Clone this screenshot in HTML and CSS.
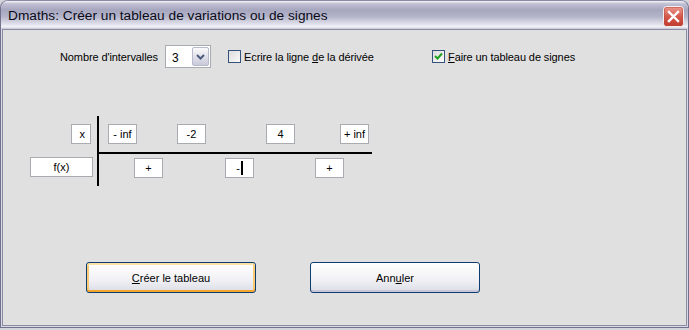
FILE: index.html
```html
<!DOCTYPE html>
<html>

<head>
    <meta charset="UTF-8">
    <link rel="stylesheet" href="styles.css">
</head>

<body>
    <div class="window">
        <div class="titlebar">
            <span class="title">Dmaths: Créer un tableau de variations ou de signes</span>
            <span class="close">
                <svg width="21" height="21" viewBox="0 0 21 21">
                    <defs>
                        <linearGradient id="red" x1="0" y1="0" x2="0" y2="1">
                            <stop offset="0" stop-color="#ec9a90" />
                            <stop offset="0.5" stop-color="#d6594d" />
                            <stop offset="1" stop-color="#c0392e" />
                        </linearGradient>
                    </defs>
                    <rect x="0.5" y="0.5" width="20" height="20" rx="3" fill="url(#red)" stroke="#f4f0f0"></rect>
                    <rect x="1.5" y="1.5" width="18" height="18" rx="2" fill="none" stroke="#b8483e" stroke-opacity="0.5"></rect>
                    <path d="M6 6 L15 15 M15 6 L6 15" stroke="#ffffff" stroke-width="2.4" stroke-linecap="square"></path>
                </svg>
            </span>
        </div>
        <div class="client">
            <div class="options">
                <span class="label">Nombre d'intervalles</span>
                <span class="select">
                    <span class="select-value">3</span>
                    <span class="select-btn">
                        <svg width="9" height="6" viewBox="0 0 9 6">
                            <path d="M1 1 L4.5 4.5 L8 1" fill="none" stroke="#4d5d7d" stroke-width="2"></path>
                        </svg>
                    </span>
                </span>
                <span class="check check-first">
                    <span class="box"></span>
                    <span>Ecrire la ligne <u>d</u>e la dérivée</span>
                </span>
                <span class="check">
                    <span class="box">
                        <svg width="11" height="11" viewBox="0 0 11 11">
                            <path d="M2 5 L4.5 7.5 L9 2.5" fill="none" stroke="#21a121" stroke-width="2"></path>
                        </svg>
                    </span>
                    <span><u>F</u>aire un tableau de signes</span>
                </span>
            </div>

            <div class="tab">
                <div class="tab-left">
                    <span class="cell cell-x">x</span>
                    <span class="cell cell-fx">f(x)</span>
                </div>
                <div class="tab-bar"></div>
                <div class="tab-right">
                    <div class="tab-row">
                        <span class="cell" style="margin-left: 9px">- inf</span>
                        <span class="cell" style="margin-left: 40px">-2</span>
                        <span class="cell" style="margin-left: 60px">4</span>
                        <span class="cell" style="margin-left: 45px">+ inf</span>
                    </div>
                    <div class="tab-line"></div>
                    <div class="tab-row tab-row-signs">
                        <span class="cell" style="margin-left: 35px">+</span>
                        <span class="cell" style="margin-left: 62px">-<span class="caret"></span></span>
                        <span class="cell" style="margin-left: 61px">+</span>
                    </div>
                </div>
            </div>

            <div class="buttons">
                <span class="button button-default"><u>C</u>réer le tableau</span>
                <span class="button">Ann<u>u</u>ler</span>
            </div>
        </div>
    </div>
</body>

</html>
```

FILE: styles.css
```css
body {
    margin: 0;
    background-color: #d4d4dc;
    font-family: "Liberation Sans", Arial, sans-serif;
    font-size: 11px;
    color: #000;
}

.window {
    width: 689px;
    height: 328px;
    box-sizing: border-box;
    display: flex;
    flex-direction: column;
    background-color: #d9d9e4;
    border: 1px solid #72728e;
    border-top-color: #8a8aa4;
    border-radius: 8px 8px 0 0;
}

.titlebar {
    height: 28px;
    flex-shrink: 0;
    display: flex;
    align-items: center;
    padding: 0 3px 0 7px;
    border-radius: 7px 7px 0 0;
    background: linear-gradient(to bottom,
            #f6f6fa 0,
            #c0c0d4 10%,
            #a6a6bf 32%,
            #b3b3c9 55%,
            #dcdce8 80%,
            #f2f2f8 92%,
            #c6c6d4 100%);
}

.title {
    flex: 1;
    font-size: 13.7px;
    color: #0a0a18;
    padding-top: 1px;
}

.close {
    display: flex;
    margin-top: 2px;
    margin-right: 1px;
}

.client {
    flex: 1;
    margin: 0 1px 1px;
    background-color: #e0e0e0;
    border: 1px solid #8b8ba6;
    padding: 15px 0 0 57px;
}

/* options line */

.options {
    display: flex;
    align-items: center;
    height: 23px;
    letter-spacing: -0.1px;
}

.label {
    width: 105px;
}

.select {
    width: 46px;
    height: 23px;
    box-sizing: border-box;
    display: flex;
    align-items: center;
    justify-content: space-between;
    background-color: #fff;
    border: 1px solid #a7acb2;
    padding: 0 1px 0 6px;
}

.select-value {
    font-size: 12px;
    padding-top: 2px;
}

.select-btn {
    width: 17px;
    height: 19px;
    box-sizing: border-box;
    display: flex;
    align-items: center;
    justify-content: center;
    border: 1px solid #b9b9cc;
    border-radius: 2px;
    background: linear-gradient(to bottom, #fafafc, #dcdce8 60%, #c9c9da);
}

.check {
    display: flex;
    align-items: center;
    gap: 3px;
    margin-left: 17px;
}

.check-first {
    width: 187px;
}

.box {
    width: 13px;
    height: 13px;
    box-sizing: border-box;
    display: flex;
    align-items: center;
    justify-content: center;
    border: 1px solid #34527c;
    background: linear-gradient(135deg, #dcdcdc, #fafafa);
}

/* table */

.tab {
    display: flex;
    margin: 48px 0 0 -30px;
    height: 70px;
}

.tab-left {
    width: 67px;
    display: flex;
    flex-direction: column;
    align-items: flex-end;
}

.cell {
    height: 20px;
    width: 29px;
    box-sizing: border-box;
    display: flex;
    align-items: center;
    justify-content: center;
    background-color: #fff;
    border: 1px solid #a8acb1;
    font-size: 11px;
}

.cell-x {
    width: 20px;
    margin: 8px 6px 0 0;
    justify-content: flex-end;
    padding-right: 5px;
}

.cell-fx {
    width: 63px;
    margin: 13px 4px 0 0;
}

.tab-bar {
    width: 2px;
    background-color: #000;
}

.tab-right {
    width: 273px;
}

.tab-row {
    display: flex;
    margin-top: 8px;
}

.tab-line {
    height: 2px;
    margin-top: 8px;
    background-color: #000;
}

.tab-row-signs {
    margin-top: 4px;
}

.caret {
    width: 2px;
    height: 14px;
    margin-left: 1px;
    background-color: #000;
}

/* buttons */

.buttons {
    display: flex;
    gap: 54px;
    margin: 76px 0 0 26px;
}

.button {
    width: 170px;
    height: 31px;
    box-sizing: border-box;
    display: flex;
    align-items: center;
    justify-content: center;
    border: 1px solid #0c3c70;
    border-radius: 3px;
    background: linear-gradient(to bottom, #ffffff, #f2f2f6 55%, #dcdce6);
    box-shadow: inset 0 -2px 0 #c8c8d8;
}

.button-default {
    box-shadow: inset 0 2px 0 #fde2a6, inset 0 -2px 0 #f5a62c, inset 2px 0 0 #fbcb74, inset -2px 0 0 #fbcb74;
}
```
